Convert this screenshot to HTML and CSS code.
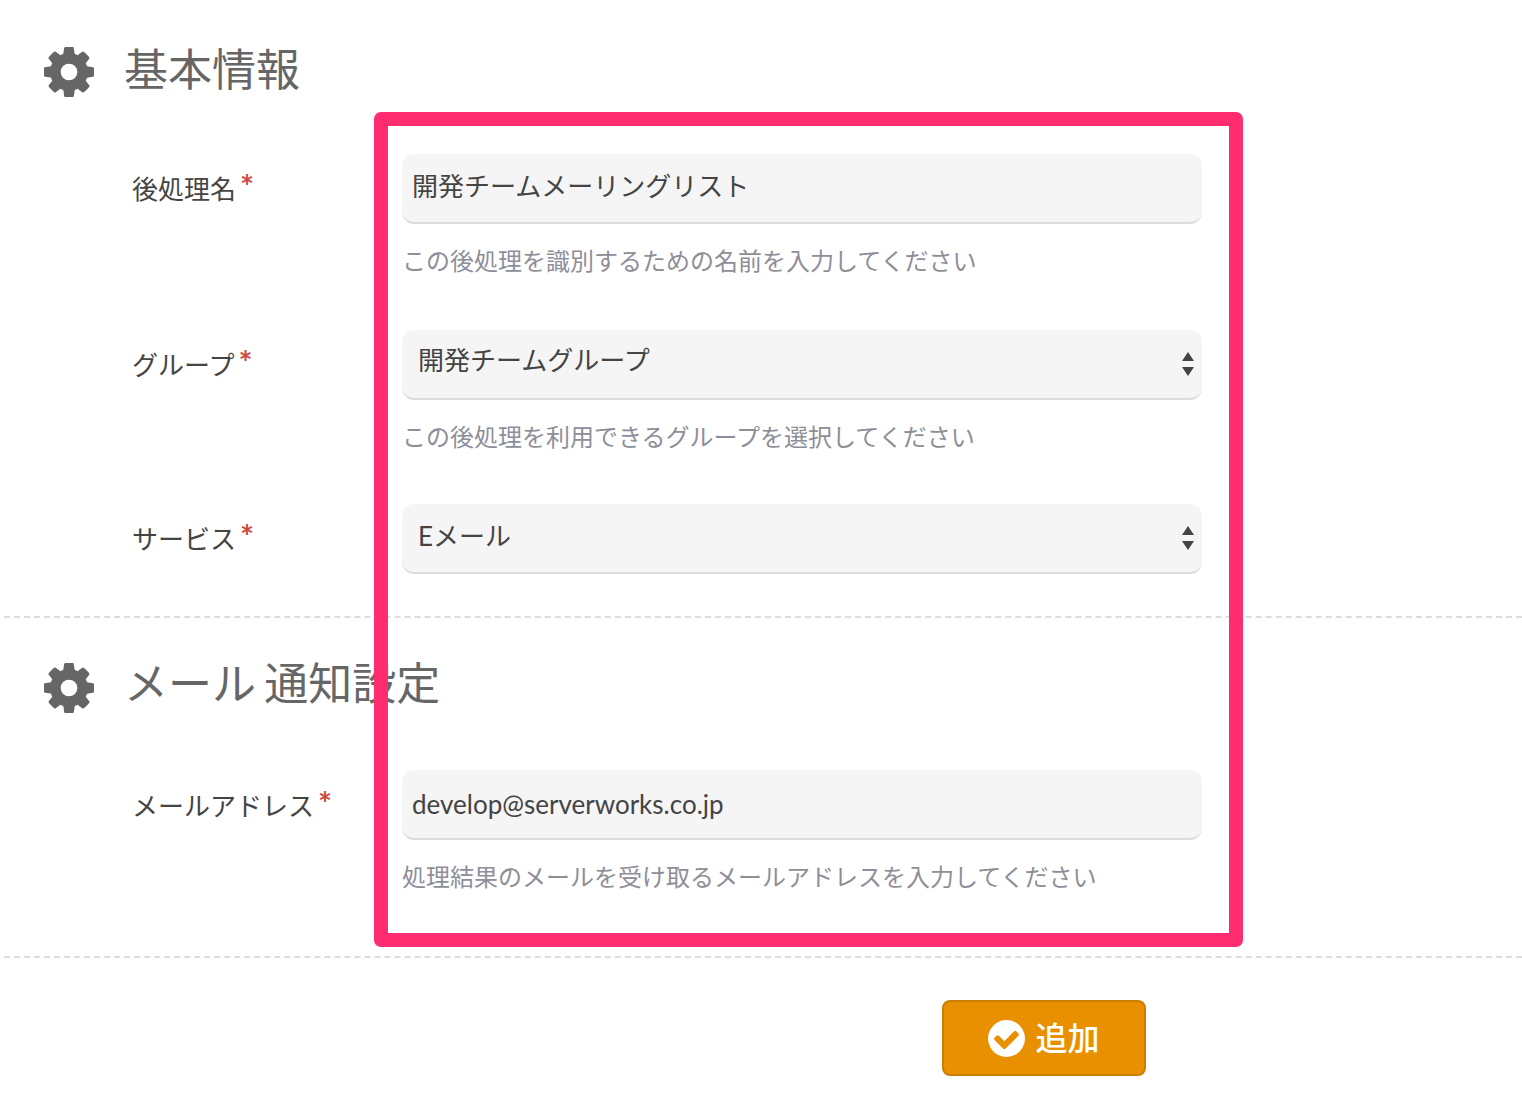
FILE: index.html
```html
<!DOCTYPE html>
<html lang="ja">
<head>
  <meta charset="UTF-8">
  <meta name="viewport" content="width=device-width, initial-scale=1.0">
  <title>後処理の追加</title>
  <link rel="stylesheet" href="styles.css">
</head>
<body>
  <form class="page">
    <section class="section section-basic">
      <h2 class="section-title">
        <svg class="gear" viewBox="128 128 1536 1536"><path d="M1152 896q0-106-75-181t-181-75-181 75-75 181 75 181 181 75 181-75 75-181zm512-109v222q0 12-8 23t-20 13l-185 28q-19 54-39 91 35 50 107 138 10 12 10 25t-9 23q-27 37-99 108t-94 71q-12 0-26-9l-138-108q-44 23-91 38-16 136-29 186-7 28-36 28h-222q-14 0-24.500-8.500t-11.500-21.500l-28-184q-49-16-90-37l-141 107q-10 9-25 9-14 0-25-11-126-114-165-168-7-10-7-23 0-12 8-23 15-21 51-66.500t54-70.500q-27-50-41-99l-183-27q-13-2-21-12.500t-8-23.500v-222q0-12 8-23t19-13l186-28q14-46 39-92-40-57-107-138-10-12-10-24 0-10 9-23 26-36 98.500-107.500t94.500-71.500q13 0 26 10l138 107q44-23 91-38 16-136 29-186 7-28 36-28h222q14 0 24.500 8.500t11.500 21.500l28 184q49 16 90 37l142-107q9-9 24-9 13 0 25 10 129 119 165 170 7 8 7 22 0 12-8 23-15 21-51 66.500t-54 70.500q26 50 41 98l183 28q13 2 21 12.500t8 23.500z"/></svg>
        <span class="title-text">基本情報</span>
      </h2>

      <div class="form-row">
        <label class="form-label" for="name">後処理名<span class="required">*</span></label>
        <div class="form-field">
          <input class="text-input" type="text" id="name" value="開発チームメーリングリスト">
          <p class="help">この後処理を識別するための名前を入力してください</p>
        </div>
      </div>

      <div class="form-row form-row-tight">
        <label class="form-label" for="group">グループ<span class="required">*</span></label>
        <div class="form-field">
          <div class="select-box">
            <select class="select-input" id="group"><option>開発チームグループ</option></select>
            <span class="select-arrows"></span>
          </div>
          <p class="help">この後処理を利用できるグループを選択してください</p>
        </div>
      </div>

      <div class="form-row form-row-last">
        <label class="form-label" for="service">サービス<span class="required">*</span></label>
        <div class="form-field">
          <div class="select-box">
            <select class="select-input select-latin" id="service"><option>Eメール</option></select>
            <span class="select-arrows"></span>
          </div>
        </div>
      </div>
    </section>

    <section class="section section-mail">
      <h2 class="section-title">
        <svg class="gear" viewBox="128 128 1536 1536"><path d="M1152 896q0-106-75-181t-181-75-181 75-75 181 75 181 181 75 181-75 75-181zm512-109v222q0 12-8 23t-20 13l-185 28q-19 54-39 91 35 50 107 138 10 12 10 25t-9 23q-27 37-99 108t-94 71q-12 0-26-9l-138-108q-44 23-91 38-16 136-29 186-7 28-36 28h-222q-14 0-24.500-8.500t-11.500-21.500l-28-184q-49-16-90-37l-141 107q-10 9-25 9-14 0-25-11-126-114-165-168-7-10-7-23 0-12 8-23 15-21 51-66.500t54-70.500q-27-50-41-99l-183-27q-13-2-21-12.500t-8-23.500v-222q0-12 8-23t19-13l186-28q14-46 39-92-40-57-107-138-10-12-10-24 0-10 9-23 26-36 98.500-107.500t94.500-71.500q13 0 26 10l138 107q44-23 91-38 16-136 29-186 7-28 36-28h222q14 0 24.500 8.500t11.500 21.500l28 184q49 16 90 37l142-107q9-9 24-9 13 0 25 10 129 119 165 170 7 8 7 22 0 12-8 23-15 21-51 66.500t-54 70.500q26 50 41 98l183 28q13 2 21 12.500t8 23.500z"/></svg>
        <span class="title-text title-mail">メール 通知設定</span>
      </h2>

      <div class="form-row form-row-last">
        <label class="form-label form-label-mail" for="email">メールアドレス<span class="required">*</span></label>
        <div class="form-field">
          <input class="text-input text-latin" type="text" id="email" value="develop@serverworks.co.jp">
          <p class="help">処理結果のメールを受け取るメールアドレスを入力してください</p>
        </div>
      </div>
    </section>

    <div class="actions">
      <button type="button" class="add-btn">
        <svg class="check" viewBox="128 128 1536 1536"><path d="M1412 734q0-28-18-46l-91-90q-19-19-45-19t-45 19l-408 407-226-226q-19-19-45-19t-45 19l-91 90q-18 18-18 46 0 27 18 45l362 362q19 19 45 19 27 0 46-19l543-543q18-18 18-45zm252 162q0 209-103 385.500t-279.500 279.500-385.500 103-385.500-103-279.500-279.500-103-385.500 103-385.500 279.500-279.500 385.500-103 385.500 103 279.500 279.500 103 385.500z"/></svg>
        <span class="add-label">追加</span>
      </button>
    </div>
  </form>

  <div class="highlight"></div>
</body>
</html>
```

FILE: styles.css
```css
* {
  box-sizing: border-box;
}
body {
  margin: 0;
  background-color: #fff;
  color: #444;
  font-family: Lato, "Noto Sans CJK JP", sans-serif;
  position: relative;
  height: 1114px;
  overflow: hidden;
}
.section {
  margin-left: 4px;
  border-bottom: 2px dashed #ddd;
}
.section-basic {
  padding-top: 46px;
  height: 618px;
}
.section-mail {
  padding-top: 44px;
  height: 340px;
}
.section-title {
  display: flex;
  align-items: center;
  height: 51px;
  margin: 0 0 57px 40px;
  font-size: 44px;
  font-weight: 400;
  line-height: 51px;
  color: #666;
}
.gear {
  width: 50px;
  height: 50px;
  margin-right: 30px;
  fill: #666;
  flex-shrink: 0;
}
.title-text {
  margin-bottom: 4px;
}
.title-mail {
  margin-bottom: 8px;
  word-spacing: -3px;
}
.form-row {
  display: grid;
  grid-template-columns: 270px 800px;
  padding-left: 128px;
  margin-bottom: 51px;
}
.form-row-tight {
  margin-bottom: 49px;
}
.form-row-last {
  margin-bottom: 0;
}
.form-label {
  padding-top: 16px;
  font-size: 26px;
  line-height: 38px;
  color: #444;
}
.form-label-mail {
  padding-top: 17px;
}
.required {
  position: relative;
  top: 0;
  margin-left: 4px;
  font-size: 33px;
  font-weight: 700;
  line-height: 0;
  color: #d0473d;
}
.text-input,
.select-input {
  display: block;
  width: 100%;
  height: 70px;
  border: none;
  border-bottom: 2px solid #ddd;
  border-radius: 12px;
  background-color: #f5f5f5;
  color: #444;
  font-family: inherit;
  font-size: 26px;
  outline: none;
}
.text-input {
  padding: 0 10px 8px;
}
.text-latin {
  padding-bottom: 0;
}
.select-input {
  padding: 0 40px 8px 16px;
  appearance: none;
  -webkit-appearance: none;
}
.select-latin {
  padding-bottom: 4px;
}
.select-box {
  position: relative;
}
.select-arrows {
  position: absolute;
  top: 22px;
  right: 7px;
  width: 14px;
  height: 24px;
}
.select-arrows::before,
.select-arrows::after {
  content: "";
  position: absolute;
  left: 1px;
  border-left: 6px solid transparent;
  border-right: 6px solid transparent;
}
.select-arrows::before {
  top: 0;
  border-bottom: 9px solid #444;
}
.select-arrows::after {
  bottom: 0;
  border-top: 9px solid #444;
}
.help {
  margin: 19px 0 0;
  font-size: 24px;
  line-height: 36px;
  color: #8e8e99;
}
.actions {
  padding: 42px 0 0 942px;
}
.add-btn {
  display: flex;
  align-items: center;
  justify-content: center;
  gap: 10px;
  width: 204px;
  height: 76px;
  padding: 0;
  border: 2px solid #cc8000;
  border-radius: 8px;
  background-color: #e89000;
  color: #fff;
  font-family: inherit;
  font-size: 32px;
  font-weight: 500;
  cursor: pointer;
}
.add-label {
  margin-bottom: 4px;
}
.check {
  width: 37px;
  height: 37px;
  fill: #fff;
}
.highlight {
  position: absolute;
  left: 374px;
  top: 112px;
  width: 869px;
  height: 835px;
  border: 14px solid #ff2d6f;
  border-radius: 7px;
  pointer-events: none;
}
```
